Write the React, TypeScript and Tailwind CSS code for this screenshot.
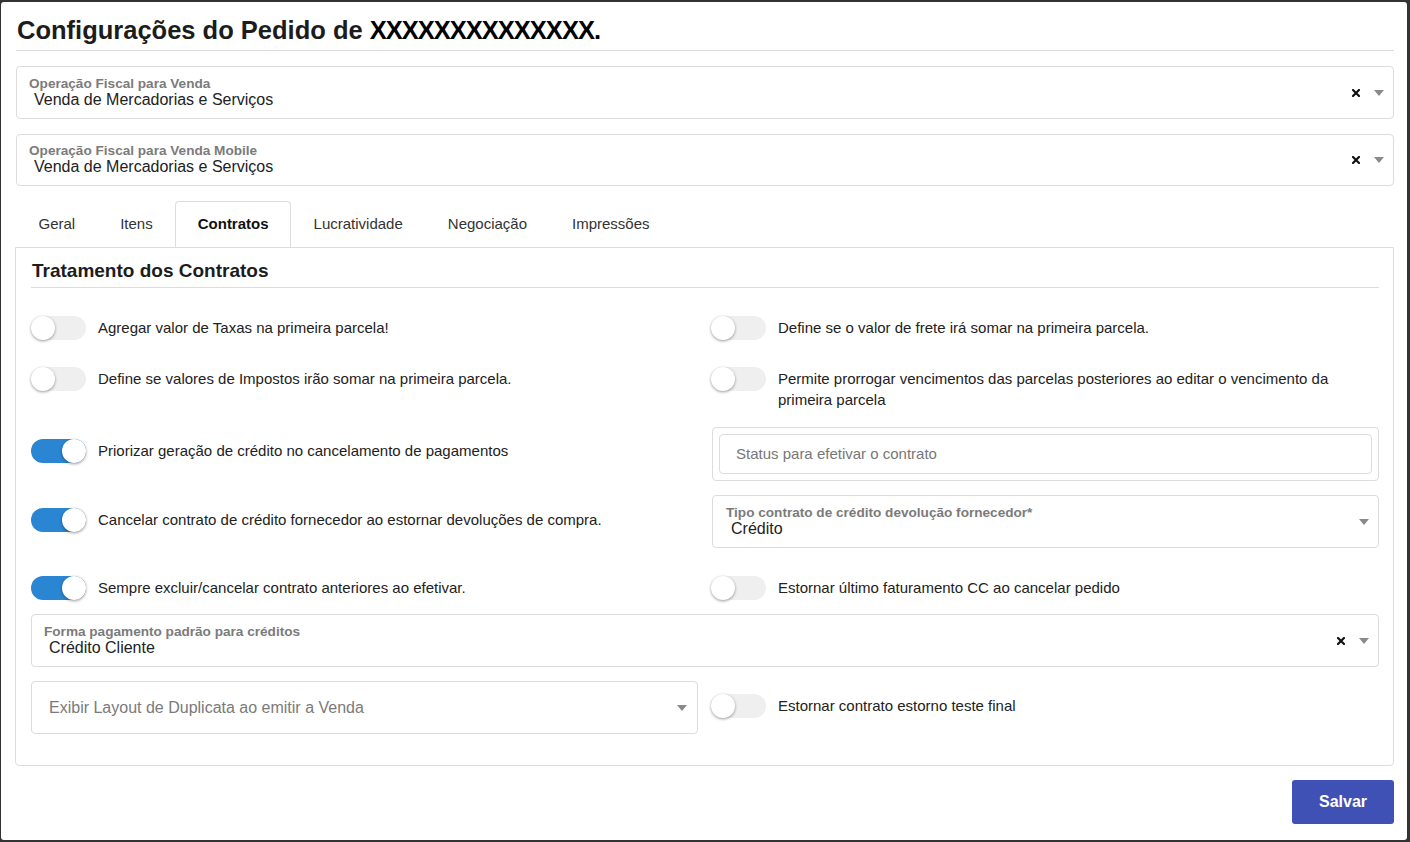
import React from 'react'

const tabs = ['Geral', 'Itens', 'Contratos', 'Lucratividade', 'Negociação', 'Impressões']

function Toggle({ on = false }: { on?: boolean }) {
  return (
    <div
      className={
        on
          ? 'flex h-[24px] w-[55px] shrink-0 items-center justify-end rounded-full bg-[#2a85d3]'
          : 'flex h-[24px] w-[55px] shrink-0 items-center justify-start rounded-full bg-[#efefef]'
      }
    >
      <div className="h-[24px] w-[24px] rounded-full bg-white shadow-[0_1px_3px_rgba(0,0,0,0.4)]" />
    </div>
  )
}

function ToggleRow({ on, label, className = '' }: { on?: boolean; label: string; className?: string }) {
  return (
    <div className={`flex items-start gap-[12px] ${className}`}>
      <Toggle on={on} />
      <span className="pt-[1px] text-[15px] leading-[21px] text-[#222]">{label}</span>
    </div>
  )
}

function ClearIcon() {
  return (
    <svg width="8" height="8" viewBox="0 0 8 8" className="shrink-0">
      <path d="M1 1L7 7M7 1L1 7" stroke="#111" strokeWidth="2.2" strokeLinecap="square" />
    </svg>
  )
}

function Caret() {
  return (
    <svg width="10" height="6" viewBox="0 0 10 6" className="shrink-0">
      <path d="M0 0H10L5 6Z" fill="#8a8a8a" />
    </svg>
  )
}

function SelectField({
  label,
  value,
  clearable = false,
  className = '',
}: {
  label: string
  value: string
  clearable?: boolean
  className?: string
}) {
  return (
    <div
      className={`flex items-center rounded-[4px] border border-[#dcdcdc] bg-white pl-[12px] pr-[9px] ${className}`}
    >
      <div className="flex min-w-0 flex-1 flex-col pb-px">
        <span className="text-[13.6px] font-bold leading-[15px] text-[#7b7b7b]">{label}</span>
        <span className="pl-[5px] text-[16px] leading-[18px] text-[#222]">{value}</span>
      </div>
      <div className="flex items-center gap-[14px]">
        {clearable && <ClearIcon />}
        <Caret />
      </div>
    </div>
  )
}

export default function App() {
  return (
    <div className="h-[842px] w-full bg-[#333] pb-[2px] pl-px pr-[3px] pt-[2px] font-['Liberation_Sans',Arial,sans-serif]">
      <div className="flex h-full flex-col rounded-[3px] bg-white pl-[15px] pr-[13px] pt-[12px]">
        {/* Header */}
        <h1 className="border-b border-[#ddd] pb-[4px] pl-[1px] text-[25.5px] font-bold leading-[32px] text-[#1c1c1c]">
          Configurações do Pedido de <span className="tracking-[-1px] text-black">XXXXXXXXXXXXXX.</span>
        </h1>

        <SelectField
          className="mt-[15px] h-[53px]"
          label="Operação Fiscal para Venda"
          value="Venda de Mercadorias e Serviços"
          clearable
        />
        <SelectField
          className="mt-[15px] h-[52px]"
          label="Operação Fiscal para Venda Mobile"
          value="Venda de Mercadorias e Serviços"
          clearable
        />

        {/* Tabs */}
        <div className="mt-[15px] flex">
          {tabs.map((t) => (
            <div
              key={t}
              className={
                t === 'Contratos'
                  ? 'relative z-10 -mb-px flex h-[46px] items-center rounded-t-[4px] border border-b-0 border-[#ddd] bg-white px-[21.5px] text-[15px] font-bold text-[#111]'
                  : 'flex h-[46px] items-center border border-transparent px-[21.5px] text-[15px] text-[#333]'
              }
            >
              {t}
            </div>
          ))}
        </div>

        {/* Panel */}
        <div className="-ml-px rounded-b-[4px] border border-[#ddd] pb-[31px] pl-[15px] pr-[14px] pt-[12px]">
          <h2 className="border-b border-[#ddd] pb-[5px] pl-[1px] text-[19px] font-bold leading-[22px] text-[#1c1c1c]">
            Tratamento dos Contratos
          </h2>

          <div className="mt-[28px] grid grid-cols-2 items-center gap-x-[14px]">
            <ToggleRow label="Agregar valor de Taxas na primeira parcela!" />
            <ToggleRow className="-ml-px" label="Define se o valor de frete irá somar na primeira parcela." />
          </div>

          <div className="mt-[27px] grid grid-cols-2 items-start gap-x-[14px]">
            <ToggleRow label="Define se valores de Impostos irão somar na primeira parcela." />
            <ToggleRow className="-ml-px" label="Permite prorrogar vencimentos das parcelas posteriores ao editar o vencimento da primeira parcela" />
          </div>

          <div className="mt-[17px] grid grid-cols-2 items-start gap-x-[14px]">
            <ToggleRow on className="mt-[12px]" label="Priorizar geração de crédito no cancelamento de pagamentos" />
            <div className="rounded-[4px] border border-[#ddd] p-[6px]">
              <div className="flex h-[40px] items-center rounded-[4px] border border-[#ddd] px-[16px] text-[15px] text-[#777]">
                Status para efetivar o contrato
              </div>
            </div>
          </div>

          <div className="mt-[14px] grid grid-cols-2 items-start gap-x-[14px]">
            <ToggleRow on className="mt-[13px]" label="Cancelar contrato de crédito fornecedor ao estornar devoluções de compra." />
            <SelectField
              className="h-[53px] pl-[13px]"
              label="Tipo contrato de crédito devolução fornecedor*"
              value="Crédito"
            />
          </div>

          <div className="mt-[28px] grid grid-cols-2 items-center gap-x-[14px]">
            <ToggleRow on label="Sempre excluir/cancelar contrato anteriores ao efetivar." />
            <ToggleRow className="-ml-px" label="Estornar último faturamento CC ao cancelar pedido" />
          </div>

          <SelectField
            className="mt-[14px] h-[53px]"
            label="Forma pagamento padrão para créditos"
            value="Crédito Cliente"
            clearable
          />

          <div className="mt-[14px] grid grid-cols-2 items-start gap-x-[14px]">
            <div className="flex h-[53px] items-center rounded-[4px] border border-[#dcdcdc] pl-[17px] pr-[10px]">
              <span className="flex-1 text-[16px] text-[#7a7a7a]">Exibir Layout de Duplicata ao emitir a Venda</span>
              <Caret />
            </div>
            <ToggleRow className="-ml-px mt-[13px]" label="Estornar contrato estorno teste final" />
          </div>
        </div>

        {/* Actions */}
        <div className="mt-[14px] flex justify-end">
          <button className="h-[44px] w-[102px] rounded-[3px] bg-[#3f51b5] text-[16px] font-bold text-white">
            Salvar
          </button>
        </div>
      </div>
    </div>
  )
}
